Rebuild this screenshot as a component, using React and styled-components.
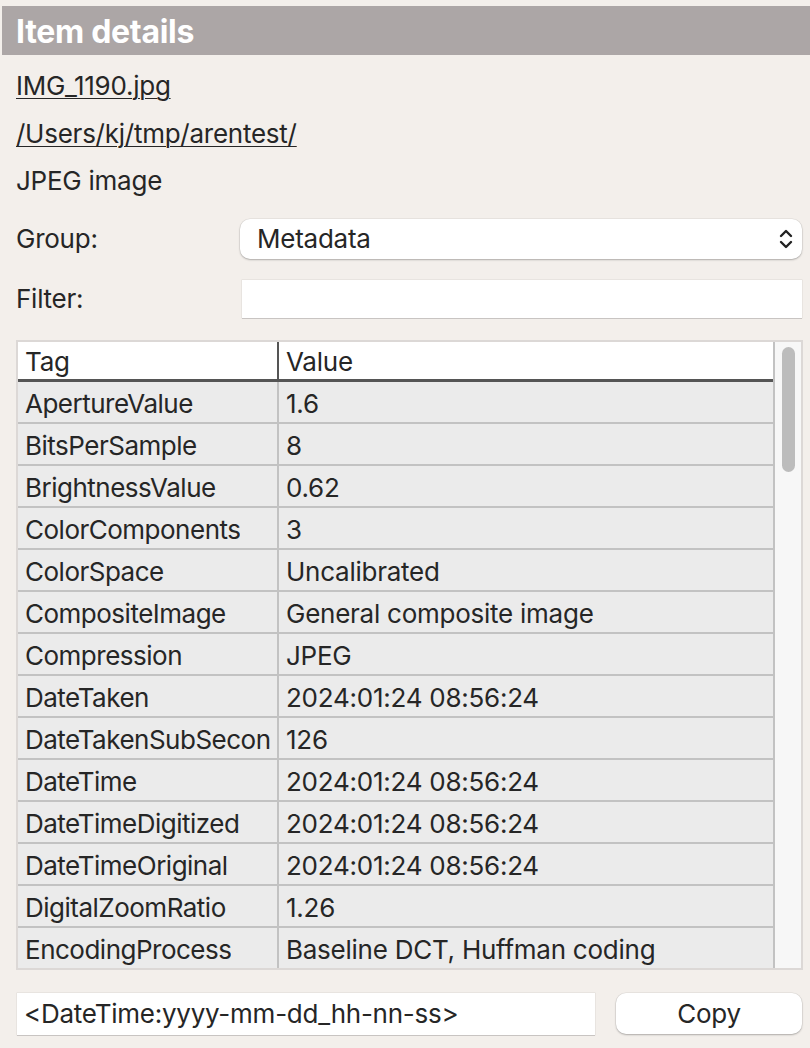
import React from "react";
import styled, { createGlobalStyle } from "styled-components";

const GlobalStyle = createGlobalStyle`
  html, body {
    margin: 0;
    padding: 0;
    background: #f3efeb;
  }
  body {
    font-family: Inter, "Liberation Sans", sans-serif;
    color: #262626;
    font-size: 26px;
    letter-spacing: -0.25px;
  }
`;

const rows = [
  ["ApertureValue", "1.6"],
  ["BitsPerSample", "8"],
  ["BrightnessValue", "0.62"],
  ["ColorComponents", "3"],
  ["ColorSpace", "Uncalibrated"],
  ["CompositeImage", "General composite image"],
  ["Compression", "JPEG"],
  ["DateTaken", "2024:01:24 08:56:24"],
  ["DateTakenSubSecon", "126"],
  ["DateTime", "2024:01:24 08:56:24"],
  ["DateTimeDigitized", "2024:01:24 08:56:24"],
  ["DateTimeOriginal", "2024:01:24 08:56:24"],
  ["DigitalZoomRatio", "1.26"],
  ["EncodingProcess", "Baseline DCT, Huffman coding"],
];

const Panel = styled.div`
  width: 810px;
  height: 1048px;
  padding-top: 6px;
  box-sizing: border-box;
  overflow: hidden;
`;

const TitleBar = styled.div`
  margin-left: 2px;
  height: 49px;
  background: #aca6a6;
  color: #fff;
  font-size: 32px;
  font-weight: 700;
  display: flex;
  align-items: center;
  padding: 2px 0 0 14px;
  box-sizing: border-box;
  letter-spacing: -0.3px;
`;

const Body = styled.div`
  padding: 0 8px 0 16px;
`;

const InfoLine = styled.div`
  height: 47.5px;
  display: flex;
  align-items: center;
  text-decoration: ${(p) => (p.$link ? "underline" : "none")};
  text-underline-offset: 3px;
  text-decoration-thickness: 1px;
  &:first-child {
    margin-top: 7px;
  }
`;

const FieldRow = styled.div`
  display: flex;
  align-items: center;
  height: ${(p) => p.$h}px;
  margin-top: ${(p) => p.$mt}px;
`;

const Label = styled.div`
  width: ${(p) => p.$w}px;
  flex-shrink: 0;
`;

const Select = styled.div`
  flex: 1;
  height: 40px;
  background: #fff;
  border-radius: 10px;
  box-shadow: 0 1px 2px rgba(0, 0, 0, 0.25), 0 0 0 0.5px rgba(0, 0, 0, 0.08);
  display: flex;
  align-items: center;
  justify-content: space-between;
  padding: 0 8px 0 17px;
  box-sizing: border-box;
`;

const TextBox = styled.div`
  flex: ${(p) => (p.$grow ? 1 : "none")};
  width: ${(p) => (p.$w ? `${p.$w}px` : "auto")};
  height: ${(p) => p.$h}px;
  background: #fff;
  box-shadow: 0 1px 0 #c8c4c2, 0 0 0 0.5px #ddd9d6;
  display: flex;
  align-items: center;
  padding-left: 7px;
  box-sizing: border-box;
  white-space: nowrap;
`;

const TableFrame = styled.div`
  margin-top: 22px;
  width: 787px;
  height: 630px;
  border: 2px solid #dcd8d6;
  box-sizing: border-box;
  display: flex;
  background: #f7f7f7;
`;

const TableBody = styled.div`
  flex: none;
  width: 755px;
  border-right: 2px solid #c2c2c2;
  overflow: hidden;
`;

const Grid = styled.div`
  display: grid;
  grid-template-columns: 259px 1fr;
`;

const HeadCell = styled.div`
  height: 34px;
  padding: 3px 0 0 7px;
  background: #fff;
  border-bottom: 3px solid #555;
  border-left: ${(p) => (p.$first ? "none" : "2px solid #555")};
  display: flex;
  align-items: center;
  ${(p) => (p.$last ? "margin-right: -2px; border-right: 2px solid #555;" : "")}
`;

const Cell = styled.div`
  height: 37px;
  padding: 3px 2px 0 7px;
  background: #ebebeb;
  border-bottom: 2px solid #c2c2c2;
  border-left: ${(p) => (p.$first ? "none" : "2px solid #c2c2c2")};
  letter-spacing: ${(p) => (p.$first ? "-0.5px" : "-0.25px")};
  display: flex;
  align-items: center;
  min-width: 0;
`;

const CellText = styled.span`
  white-space: nowrap;
  overflow: hidden;
  min-width: 0;
`;

const ScrollTrack = styled.div`
  flex: 1;
  background: #f7f7f7;
  padding: 5px 6px 0 7px;
`;

const ScrollThumb = styled.div`
  height: 125px;
  border-radius: 8px;
  background: #bcbcbc;
`;

const BottomRow = styled.div`
  display: flex;
  align-items: center;
  gap: 21px;
  margin-top: 23px;
  padding-left: 1px;
`;

const Button = styled.div`
  flex: 1;
  height: 41px;
  background: #fff;
  border-radius: 10px;
  box-shadow: 0 1px 2px rgba(0, 0, 0, 0.25), 0 0 0 0.5px rgba(0, 0, 0, 0.08);
  display: flex;
  align-items: center;
  justify-content: center;
`;

const Chevrons = () => (
  <svg width="16" height="24" viewBox="0 0 16 24" fill="none" stroke="#222" strokeWidth="2.4" strokeLinecap="round" strokeLinejoin="round">
    <path d="M3 9 L8 4 L13 9" />
    <path d="M3 15 L8 20 L13 15" />
  </svg>
);

export default function App() {
  return (
    <>
      <GlobalStyle />
      <Panel>
        <TitleBar>Item details</TitleBar>
        <Body>
          <InfoLine $link>IMG_1190.jpg</InfoLine>
          <InfoLine $link>/Users/kj/tmp/arentest/</InfoLine>
          <InfoLine>JPEG image</InfoLine>
          <FieldRow $h={40} $mt={14}>
            <Label $w={224}>Group:</Label>
            <Select>
              <span>Metadata</span>
              <Chevrons />
            </Select>
          </FieldRow>
          <FieldRow $h={38} $mt={21}>
            <Label $w={226}>Filter:</Label>
            <TextBox $grow $h={38} />
          </FieldRow>
          <TableFrame>
            <TableBody>
              <Grid>
                <HeadCell $first>Tag</HeadCell>
                <HeadCell $last>Value</HeadCell>
                {rows.map(([tag, value]) => (
                  <React.Fragment key={tag}>
                    <Cell $first>
                      <CellText>{tag}</CellText>
                    </Cell>
                    <Cell>
                      <CellText>{value}</CellText>
                    </Cell>
                  </React.Fragment>
                ))}
              </Grid>
            </TableBody>
            <ScrollTrack>
              <ScrollThumb />
            </ScrollTrack>
          </TableFrame>
          <BottomRow>
            <TextBox $w={578} $h={42}>&lt;DateTime:yyyy-mm-dd_hh-nn-ss&gt;</TextBox>
            <Button>Copy</Button>
          </BottomRow>
        </Body>
      </Panel>
    </>
  );
}
